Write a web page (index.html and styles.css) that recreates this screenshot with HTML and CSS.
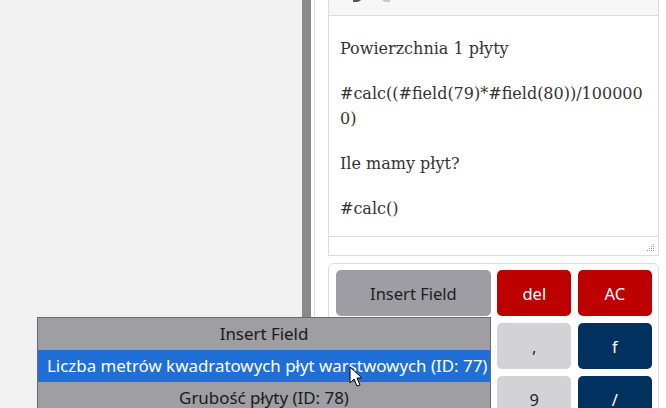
FILE: index.html
```html
<!DOCTYPE html>
<html lang="pl">
<head>
<meta charset="utf-8">
<title>Calc editor</title>
<link rel="stylesheet" href="styles.css">
</head>
<body>
<div class="page">
  <div class="left-pane"></div>
  <div class="splitter"></div>
  <div class="right-pane">
    <div class="rule"></div>
    <div class="editor-col">
      <div class="editor">
        <div class="toolbar">
          <svg class="tb-icon" width="16" height="16" viewBox="0 0 16 16"><path d="M4 6h6a4 4 0 0 1 0 8H6" fill="none" stroke="#555" stroke-width="2"/><path d="M1 6l4-4v8z" fill="#555"/></svg>
          <svg class="tb-icon" width="16" height="16" viewBox="0 0 16 16"><path d="M12 6H6a4 4 0 0 0 0 8h4" fill="none" stroke="#c8c8c8" stroke-width="2"/><path d="M15 6l-4-4v8z" fill="#c8c8c8"/></svg>
        </div>
        <div class="content">
          <p>Powierzchnia 1 płyty</p>
          <p>#calc((#field(79)*#field(80))/1000000)</p>
          <p>Ile mamy płyt?</p>
          <p>#calc()</p>
        </div>
        <div class="statusbar">
          <svg class="grip" width="8" height="8" viewBox="0 0 8 8"><g fill="#999"><rect x="6" y="0" width="1" height="1"/><rect x="4" y="2" width="1" height="1"/><rect x="6" y="2" width="1" height="1"/><rect x="2" y="4" width="1" height="1"/><rect x="4" y="4" width="1" height="1"/><rect x="6" y="4" width="1" height="1"/><rect x="0" y="6" width="1" height="1"/><rect x="2" y="6" width="1" height="1"/><rect x="4" y="6" width="1" height="1"/><rect x="6" y="6" width="1" height="1"/></g></svg>
        </div>
      </div>
      <div class="calc">
        <button class="key key-field">Insert Field</button>
        <button class="key key-red">del</button>
        <button class="key key-red">AC</button>
        <button class="key key-light">7</button>
        <button class="key key-light">8</button>
        <button class="key key-light">,</button>
        <button class="key key-navy">f</button>
        <button class="key key-light">4</button>
        <button class="key key-light">5</button>
        <button class="key key-light">9</button>
        <button class="key key-navy">/</button>
      </div>
    </div>
  </div>
</div>

<div class="dropdown">
  <div class="dd-row dd-head">Insert Field</div>
  <div class="dd-row dd-active">Liczba metrów kwadratowych płyt warstwowych (ID: 77)</div>
  <div class="dd-row">Grubość płyty (ID: 78)</div>
</div>

<svg class="cursor" width="14" height="21" viewBox="0 0 14 21"><path d="M1 1v16l4-4 3 7 3-1-3-7h5z" fill="#fff" stroke="#000" stroke-width="1" stroke-linejoin="round"/></svg>
</body>
</html>
```
FILE: styles.css
```css
html, body {
  margin: 0;
  padding: 0;
}
body {
  width: 666px;
  height: 408px;
  overflow: hidden;
  position: relative;
  background: #fff;
}
.page {
  display: flex;
  height: 408px;
}
.left-pane {
  width: 302px;
  background: #f1f1f1;
}
.splitter {
  width: 9px;
  background: #898989;
}
.right-pane {
  flex: 1;
  display: flex;
  padding-left: 3px;
  background: #fff;
}
.rule {
  width: 1px;
  background: #dcdcdc;
}
.editor-col {
  margin-left: 13px;
  width: 331px;
  margin-top: -18px;
}
.editor {
  border: 1px solid #dcdcdc;
  border-top: none;
}
.toolbar {
  height: 34px;
  background: #f7f7f7;
  border-bottom: 1px solid #dcdcdc;
  display: flex;
  gap: 17px;
  padding-left: 18px;
  padding-top: 5px;
  box-sizing: border-box;
}
.content {
  height: 221px;
  box-sizing: border-box;
  padding: 20px 12px 0 11px;
  font-family: "DejaVu Serif", "Liberation Serif", serif;
  font-size: 16px;
  line-height: 25px;
  color: #333;
  overflow: hidden;
  overflow-wrap: anywhere;
  border-bottom: 1px solid #dcdcdc;
}
.content p {
  margin: 0 0 20px;
}
.statusbar {
  height: 18px;
  display: flex;
  justify-content: flex-end;
  align-items: flex-end;
  padding: 0 3px 3px 0;
  box-sizing: border-box;
}
.calc {
  margin-top: 7px;
  border: 1px solid #dcdcdc;
  border-radius: 6px;
  padding: 6px 6px 6px 7px;
  display: grid;
  grid-template-columns: repeat(4, 1fr);
  grid-auto-rows: 46px;
  gap: 7px 6.5px;
}
.key {
  border: none;
  border-radius: 5px;
  font-family: "Noto Sans", "Open Sans", sans-serif;
  font-size: 16.5px;
  padding: 0;
  color: #fff;
}
.key-field {
  grid-column: span 2;
  background: #9d9da3;
  color: #1d1d1d;
}
.key-red {
  background: #bd0000;
}
.key-light {
  background: #d3d3d7;
  color: #222;
}
.key-navy {
  background: #00315f;
}
.dropdown {
  position: absolute;
  left: 37px;
  top: 317px;
  width: 454px;
  box-sizing: border-box;
  border: 1px solid #6b6b6b;
  background: #9e9ea3;
  font-family: "Noto Sans", "Open Sans", sans-serif;
  font-size: 16.9px;
  color: #1a1a1a;
}
.dd-row {
  height: 32px;
  line-height: 32px;
  text-align: center;
  white-space: nowrap;
}
.dd-active {
  background: #1f6fd6;
  color: #fff;
  text-align: left;
  padding-left: 9px;
}
.cursor {
  position: absolute;
  left: 349px;
  top: 366px;
}
```
